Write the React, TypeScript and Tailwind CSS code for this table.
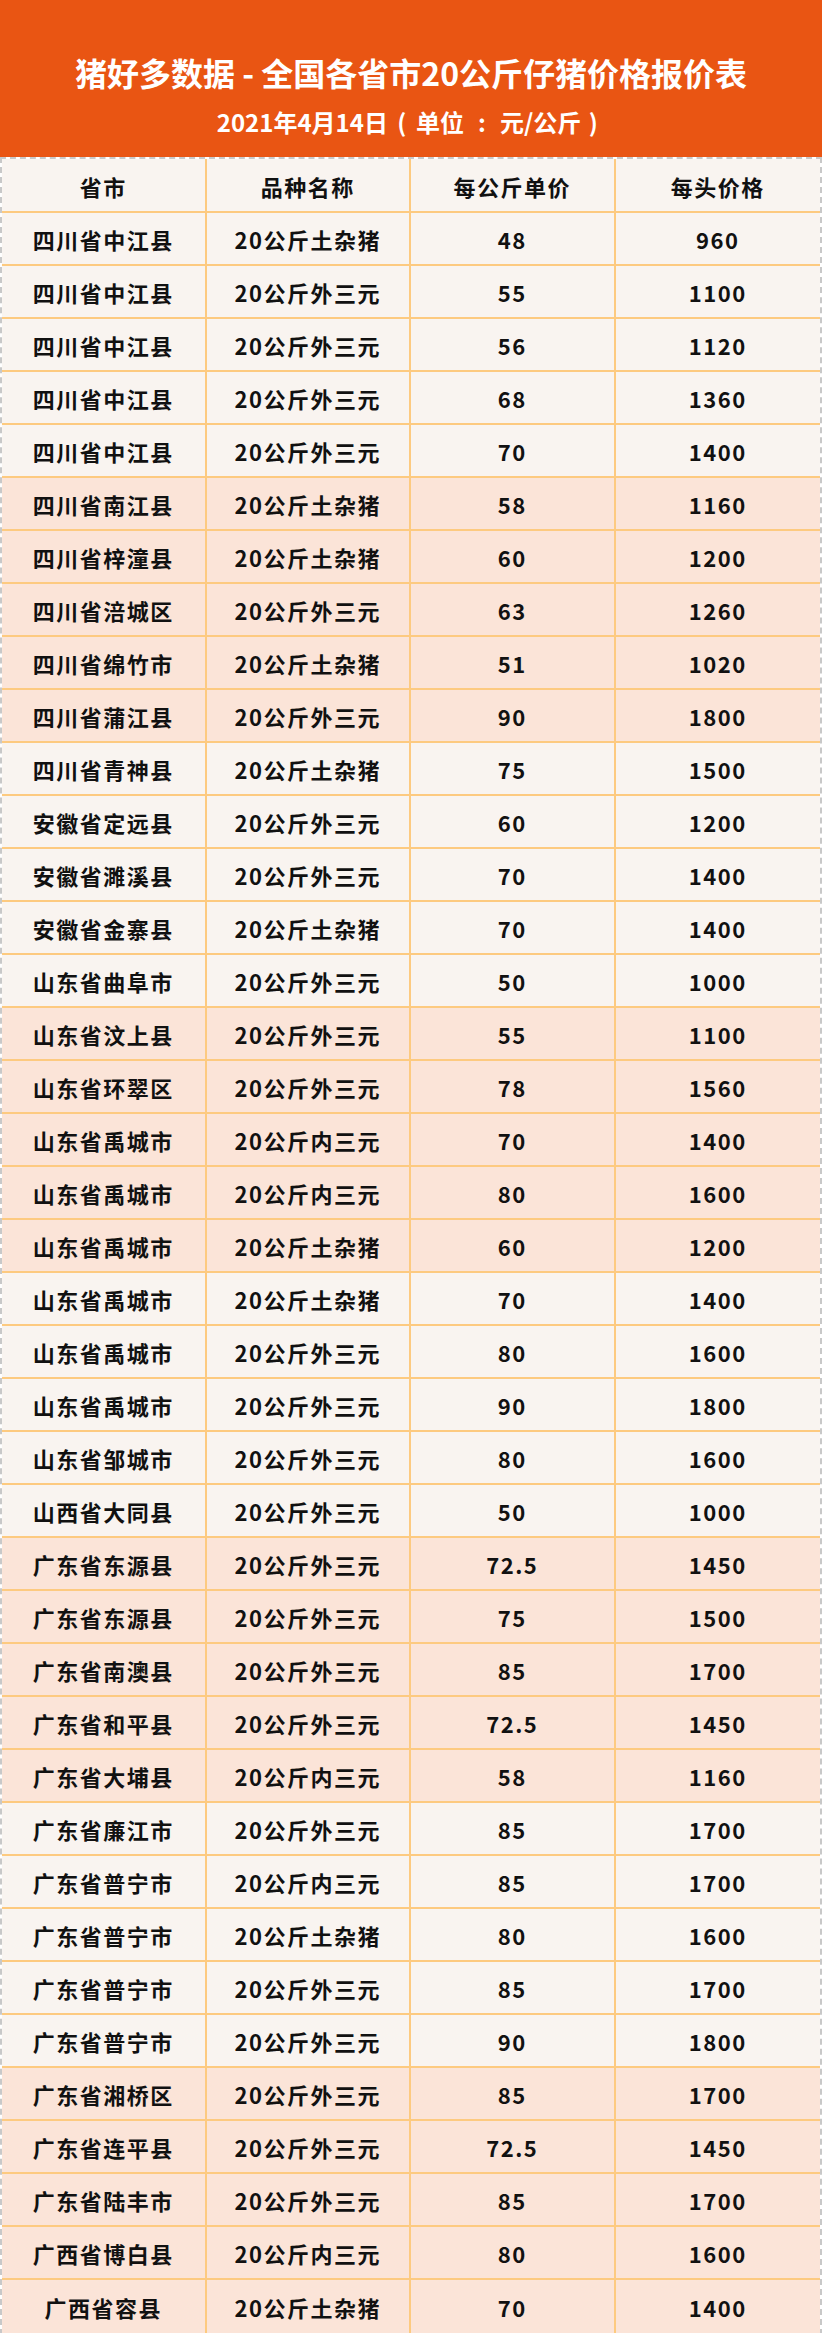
const rows: [string, string, string, string][] = [
  ['四川省中江县', '20公斤土杂猪', '48', '960'],
  ['四川省中江县', '20公斤外三元', '55', '1100'],
  ['四川省中江县', '20公斤外三元', '56', '1120'],
  ['四川省中江县', '20公斤外三元', '68', '1360'],
  ['四川省中江县', '20公斤外三元', '70', '1400'],
  ['四川省南江县', '20公斤土杂猪', '58', '1160'],
  ['四川省梓潼县', '20公斤土杂猪', '60', '1200'],
  ['四川省涪城区', '20公斤外三元', '63', '1260'],
  ['四川省绵竹市', '20公斤土杂猪', '51', '1020'],
  ['四川省蒲江县', '20公斤外三元', '90', '1800'],
  ['四川省青神县', '20公斤土杂猪', '75', '1500'],
  ['安徽省定远县', '20公斤外三元', '60', '1200'],
  ['安徽省濉溪县', '20公斤外三元', '70', '1400'],
  ['安徽省金寨县', '20公斤土杂猪', '70', '1400'],
  ['山东省曲阜市', '20公斤外三元', '50', '1000'],
  ['山东省汶上县', '20公斤外三元', '55', '1100'],
  ['山东省环翠区', '20公斤外三元', '78', '1560'],
  ['山东省禹城市', '20公斤内三元', '70', '1400'],
  ['山东省禹城市', '20公斤内三元', '80', '1600'],
  ['山东省禹城市', '20公斤土杂猪', '60', '1200'],
  ['山东省禹城市', '20公斤土杂猪', '70', '1400'],
  ['山东省禹城市', '20公斤外三元', '80', '1600'],
  ['山东省禹城市', '20公斤外三元', '90', '1800'],
  ['山东省邹城市', '20公斤外三元', '80', '1600'],
  ['山西省大同县', '20公斤外三元', '50', '1000'],
  ['广东省东源县', '20公斤外三元', '72.5', '1450'],
  ['广东省东源县', '20公斤外三元', '75', '1500'],
  ['广东省南澳县', '20公斤外三元', '85', '1700'],
  ['广东省和平县', '20公斤外三元', '72.5', '1450'],
  ['广东省大埔县', '20公斤内三元', '58', '1160'],
  ['广东省廉江市', '20公斤外三元', '85', '1700'],
  ['广东省普宁市', '20公斤内三元', '85', '1700'],
  ['广东省普宁市', '20公斤土杂猪', '80', '1600'],
  ['广东省普宁市', '20公斤外三元', '85', '1700'],
  ['广东省普宁市', '20公斤外三元', '90', '1800'],
  ['广东省湘桥区', '20公斤外三元', '85', '1700'],
  ['广东省连平县', '20公斤外三元', '72.5', '1450'],
  ['广东省陆丰市', '20公斤外三元', '85', '1700'],
  ['广西省博白县', '20公斤内三元', '80', '1600'],
  ['广西省容县', '20公斤土杂猪', '70', '1400'],
]

const font = { fontFamily: '"Noto Sans CJK SC", "Noto Sans", sans-serif' }

// 每 5 行换一次底色：浅米 / 浅粉
const Row = ({ cells, pink, last, head }: { cells: string[]; pink?: boolean; last?: boolean; head?: boolean }) => (
  <div
    className={[
      'grid grid-cols-4',
      head ? 'h-[54px]' : 'h-[53px]',
      pink ? 'bg-[#fbe4d8]' : 'bg-[#f9f4f0]',
      last ? '' : 'border-b-2 border-[#fdca80]',
    ].join(' ')}
  >
    {cells.map((c, i) => (
      <div
        key={i}
        className={[
          'flex items-center justify-center pt-[2px] text-[22px] font-bold tracking-[1.5px] text-[#111]',
          i < 3 ? 'border-r-2 border-[#fdca80]' : '',
        ].join(' ')}
      >
        {c}
      </div>
    ))}
  </div>
)

export default function App() {
  return (
    <div className="w-[822px] bg-white" style={font}>
      <div className="flex h-[157px] flex-col items-center bg-[#e95513] text-white">
        <h1 className="mt-[52px] text-[32px] leading-[40px] font-bold">猪好多数据 - 全国各省市20公斤仔猪价格报价表</h1>
        <p className="mt-[15px] flex items-center text-[24px] leading-[30px] font-bold">
          2021年4月14日
          <span className="inline-block w-[28px] text-center">(</span>
          单位
          <span className="inline-block w-[36px] text-center">:</span>
          元/公斤
          <span className="inline-block w-[24px] text-center">)</span>
        </p>
      </div>
      <div className="border-2 border-dashed border-[#c8c8c8]">
        <Row head cells={['省市', '品种名称', '每公斤单价', '每头价格']} />
        {rows.map((r, i) => (
          <Row key={i} cells={r} pink={Math.floor(i / 5) % 2 === 1} last={i === rows.length - 1} />
        ))}
      </div>
    </div>
  )
}
